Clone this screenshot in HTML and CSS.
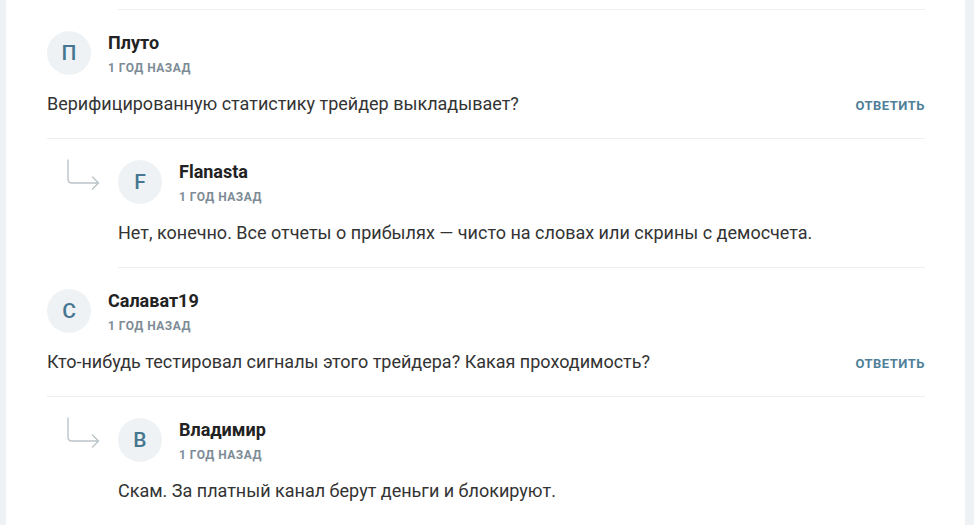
FILE: index.html
```html
<!DOCTYPE html>
<html lang="ru">
<head>
<meta charset="utf-8">
<title>Комментарии</title>
<link rel="stylesheet" href="styles.css">
</head>
<body>
<div class="page">
  <div class="panel">
    <div class="prev-divider"></div>

    <div class="comment">
      <div class="head">
        <div class="avatar">П</div>
        <div class="meta">
          <div class="name">Плуто</div>
          <div class="time">1 год назад</div>
        </div>
      </div>
      <div class="body">
        <p class="text">Верифицированную статистику трейдер выкладывает?</p>
        <a class="reply-btn" href="#">Ответить</a>
      </div>
    </div>

    <div class="comment reply">
      <svg class="arrow" width="34" height="34" viewBox="0 0 34 34" aria-hidden="true">
        <path d="M2 1 V20 Q2 24 6 24 H32 M26.5 18 L32.5 24 L26.5 30" fill="none" stroke="#bcc4c9" stroke-width="1.4" stroke-linecap="round" stroke-linejoin="round"/>
      </svg>
      <div class="head">
        <div class="avatar">F</div>
        <div class="meta">
          <div class="name">Flanasta</div>
          <div class="time">1 год назад</div>
        </div>
      </div>
      <div class="body">
        <p class="text">Нет, конечно. Все отчеты о прибылях — чисто на словах или скрины с демосчета.</p>
      </div>
    </div>

    <div class="comment">
      <div class="head">
        <div class="avatar">С</div>
        <div class="meta">
          <div class="name">Салават19</div>
          <div class="time">1 год назад</div>
        </div>
      </div>
      <div class="body">
        <p class="text">Кто-нибудь тестировал сигналы этого трейдера? Какая проходимость?</p>
        <a class="reply-btn" href="#">Ответить</a>
      </div>
    </div>

    <div class="comment reply">
      <svg class="arrow" width="34" height="34" viewBox="0 0 34 34" aria-hidden="true">
        <path d="M2 1 V20 Q2 24 6 24 H32 M26.5 18 L32.5 24 L26.5 30" fill="none" stroke="#bcc4c9" stroke-width="1.4" stroke-linecap="round" stroke-linejoin="round"/>
      </svg>
      <div class="head">
        <div class="avatar">В</div>
        <div class="meta">
          <div class="name">Владимир</div>
          <div class="time">1 год назад</div>
        </div>
      </div>
      <div class="body">
        <p class="text">Скам. За платный канал берут деньги и блокируют.</p>
      </div>
    </div>
  </div>
</div>
</body>
</html>
```

FILE: styles.css
```css
* {
  box-sizing: border-box;
}

html, body {
  margin: 0;
  padding: 0;
  height: 100%;
  overflow: hidden;
}

body {
  font-family: Roboto, "Liberation Sans", Arial, sans-serif;
  color: #333;
  background: #eef2f4;
}

.page {
  display: flex;
  height: 100%;
  padding: 0 9px 0 6px;
}

.panel {
  flex: 1;
  background: #fff;
  padding: 0 40px 0 41px;
}

.prev-divider {
  height: 1px;
  background: #eceff1;
  margin: 9px 0 0 71px;
}

.comment {
  position: relative;
  padding: 21px 0 22px;
  border-bottom: 1px solid #eceff1;
}

.comment.reply {
  margin-left: 71px;
}

.arrow {
  position: absolute;
  left: -52px;
  top: 20px;
}

.head {
  display: flex;
  align-items: flex-start;
  gap: 17px;
  height: 44px;
}

.avatar {
  width: 44px;
  height: 44px;
  border-radius: 50%;
  background: #eef2f5;
  color: #46768f;
  display: flex;
  align-items: center;
  justify-content: center;
  font-size: 21px;
  font-weight: 500;
  flex-shrink: 0;
}

.meta {
  display: flex;
  flex-direction: column;
  gap: 7px;
  padding-top: 2px;
}

.name {
  font-size: 18px;
  font-weight: 700;
  color: #222;
  line-height: 20px;
}

.time {
  font-size: 12px;
  font-weight: 700;
  color: #7d8b96;
  text-transform: uppercase;
  letter-spacing: 0.5px;
  line-height: 16px;
}

.body {
  display: flex;
  align-items: center;
  justify-content: space-between;
  margin-top: 17px;
  height: 24px;
}

.text {
  margin: 0;
  font-size: 18px;
  line-height: 24px;
  color: #333;
}

.reply-btn {
  font-size: 13px;
  font-weight: 700;
  color: #4f7f99;
  text-transform: uppercase;
  text-decoration: none;
  letter-spacing: 0.5px;
  margin-top: 2px;
}
```
